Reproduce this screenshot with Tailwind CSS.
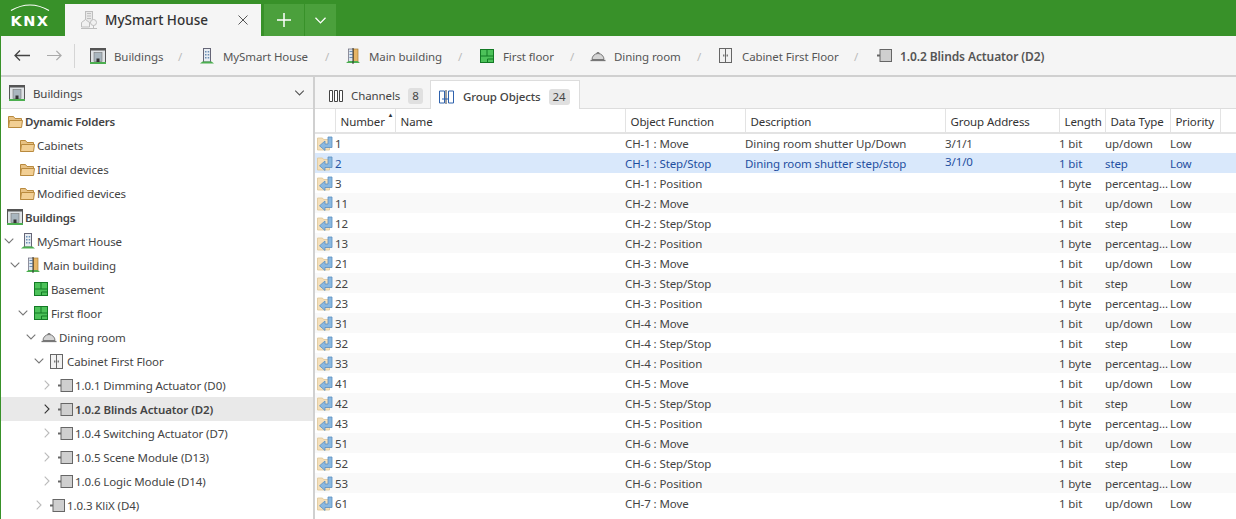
<!DOCTYPE html>
<html lang="en">
<head>
<meta charset="UTF-8" />
<title>ETS - MySmart House</title>
<script src="https://cdn.jsdelivr.net/npm/@tailwindcss/browser@4"></script>
</head>
<body class="h-[519px] w-[1236px] overflow-hidden bg-white font-['Noto_Sans','Open_Sans',sans-serif] text-[11.5px] tracking-[-0.1px] text-[#444]">

<!-- icon sprites -->
<svg class="hidden">
  <symbol id="i-buildings" viewBox="0 0 16 16">
    <rect x="0.5" y="0.5" width="15" height="14" fill="#dfe3e6" stroke="#555"/>
    <rect x="0.5" y="0.5" width="15" height="2" fill="#555"/>
    <rect x="4" y="4.5" width="8" height="9" fill="#a9b6bf" stroke="#777" stroke-width=".6"/>
    <rect x="6.5" y="10.5" width="3" height="3.5" fill="#333"/>
    <rect x="0" y="14" width="16" height="2" fill="#4caf50"/>
  </symbol>
  <symbol id="i-house" viewBox="0 0 16 16">
    <rect x="4.5" y="0.5" width="7" height="13.5" fill="#e8edf2" stroke="#667"/>
    <path d="M6 3h1.500v1.500H6zM8.700 3h1.500v1.500H8.700zM6 6h1.500v1.500H6zM8.700 6h1.500v1.500H8.700zM6 9h1.500v1.500H6zM8.700 9h1.500v1.500H8.700z" fill="#6b8fb5"/>
    <path d="M1 15.500 3.500 13.500h9l2.500 2z" fill="#4caf50"/>
  </symbol>
  <symbol id="i-main" viewBox="0 0 16 16">
    <rect x="3.500" y="1" width="5" height="13" fill="#dfe6ee" stroke="#667" stroke-width=".7"/>
    <rect x="8.500" y="1" width="4.500" height="13" fill="#e6b566" stroke="#a87c35" stroke-width=".7"/>
    <path d="M4.500 3h3v1h-3zM4.500 6h3v1h-3zM4.500 9h3v1h-3z" fill="#6b8fb5"/>
    <path d="M1 15 3.500 13h9l2.500 2z" fill="#4caf50"/>
    <path d="M8 0v16" stroke="#222" stroke-width=".9"/>
  </symbol>
  <symbol id="i-floor" viewBox="0 0 14 14">
    <rect x="0.500" y="0.500" width="13" height="13" fill="#4dc25a" stroke="#137a25"/>
    <path d="M7 .5V7M.5 7h13M7.500 10h6M7.500 10v3.500" stroke="#137a25" fill="none"/>
  </symbol>
  <symbol id="i-room" viewBox="0 0 16 12">
    <path d="M2 9.500a6 6 0 0 1 12 0z" fill="#d4d4d4" stroke="#777"/>
    <path d="M.5 10.500h15" stroke="#777" stroke-width="1.300"/>
    <path d="M6.500 3.500a1.500 1 0 0 1 3 0" fill="none" stroke="#777"/>
  </symbol>
  <symbol id="i-cabinet" viewBox="0 0 13 15">
    <rect x="0.500" y="0.500" width="12" height="14" fill="#f1f1f1" stroke="#666"/>
    <path d="M6.500 .5v14" stroke="#666"/>
    <path d="M4.800 6.500v2M8.200 6.500v2" stroke="#444"/>
  </symbol>
  <symbol id="i-device" viewBox="0 0 15 13">
    <path d="M0 5.500h3v2H0z" fill="#666"/>
    <rect x="3" y="0.500" width="11.500" height="12" fill="#cfcfcf" stroke="#666"/>
  </symbol>
  <symbol id="i-folder" viewBox="0 0 15 13">
    <path d="M.5 12.500V1.500h5l1.500 2h6.500v2" fill="#e8c285" stroke="#b98a3e"/>
    <path d="M.5 12.500l1-7h13l-1 7z" fill="#f2cf94" stroke="#b98a3e"/>
  </symbol>
  <symbol id="i-object" viewBox="0 0 16 15">
    <path d="M.5 14V2h5l1 1.500h6V14z" fill="#f5e0bb" stroke="#ddc595" stroke-width=".8"/>
    <path d="M11 1h4v10.500H8v3L2.500 9.750 8 5v3h3z" fill="#8ab8e0" stroke="#5a8fc0" stroke-width=".8"/>
  </symbol>
  <symbol id="i-down" viewBox="0 0 10 6"><path d="M.7.7 5 5l4.300-4.300" fill="none" stroke="currentColor" stroke-width="1.100"/></symbol>
  <symbol id="i-right" viewBox="0 0 6 10"><path d="M.7.7 5 5 .7 9.300" fill="none" stroke="currentColor" stroke-width="1.100"/></symbol>
</svg>

<!-- title bar -->
<header class="flex h-9 items-end bg-[#389129]">
  <div class="flex h-9 w-[65px] items-center pl-[10px]">
    <div class="relative w-[40px] pt-[6px] text-center font-['DejaVu_Sans',sans-serif] text-[14.5px] leading-none font-bold tracking-[1.5px] text-white">
      <svg class="absolute top-[-5px] left-0 h-[8px] w-[40px]" viewBox="0 0 40 8"><path d="M1 7.500Q20-3.500 39 7.500" fill="none" stroke="#fff" stroke-width="1.200"/></svg>
      KNX
    </div>
  </div>
  <div class="flex h-8 w-[196px] items-center bg-[#f5f5f5] pl-4 text-[13.5px] tracking-normal text-[#333]">
    <svg class="h-[18px] w-[16px] opacity-50" viewBox="0 0 16 18">
      <rect x="4.500" y="0.500" width="7" height="11" fill="#ddd" stroke="#888"/>
      <path d="M6 2.500h4M6 5h4M6 7.500h4" stroke="#888"/>
      <path d="M0.500 16V11.500L4.500 8.500l4 3V16z" fill="#eee" stroke="#888"/>
      <circle cx="12.500" cy="11.500" r="3" fill="#eee" stroke="#888"/>
      <path d="M12.500 14.500V17M0 17.500h16" stroke="#888"/>
    </svg>
    <span class="ml-[8px] w-[133px] font-medium">MySmart House</span>
    <svg class="h-[10px] w-[10px]" viewBox="0 0 10 10"><path d="M.5.500l9 9M9.500.500l-9 9" stroke="#555" stroke-width="1"/></svg>
  </div>
  <div class="ml-[3px] flex h-8 w-10 items-center justify-center bg-[#4ba03c]">
    <svg class="h-[14px] w-[14px]" viewBox="0 0 14 14"><path d="M7 0v14M0 7h14" stroke="#fff" stroke-width="1.500"/></svg>
  </div>
  <div class="ml-px flex h-8 w-[31px] items-center justify-center bg-[#4ba03c] text-white">
    <svg class="h-[7px] w-[13px]" viewBox="0 0 10 6"><use href="#i-down"/></svg>
  </div>
</header>

<div class="border-l border-[#389129]">
  <!-- breadcrumb toolbar -->
  <nav class="flex h-[41px] items-center border-b-2 border-[#d0d0d0] bg-[#f5f5f5] text-[#555]">
    <svg class="ml-[13px] h-[11px] w-[16px]" viewBox="0 0 16 11"><path d="M16 5.500H1M6 .5l-5 5 5 5" fill="none" stroke="#444" stroke-width="1.300"/></svg>
    <svg class="ml-[17px] h-[11px] w-[15px]" viewBox="0 0 16 11"><path d="M0 5.500h15M10 .5l5 5-5 5" fill="none" stroke="#aaa" stroke-width="1.300"/></svg>
    <div class="ml-[12px] h-6 w-px bg-[#d5d5d5]"></div>
    <svg class="ml-[15px] h-4 w-4"><use href="#i-buildings"/></svg>
    <span class="ml-[8px] w-[48px] pt-[2px] whitespace-nowrap">Buildings</span>
    <span class="ml-[16px] w-[4px] pt-[2px] text-[#bbb]">/</span>
    <svg class="ml-[17px] h-4 w-4"><use href="#i-house"/></svg>
    <span class="ml-[8px] w-[85px] pt-[2px] whitespace-nowrap">MySmart House</span>
    <span class="ml-[17px] w-[4px] pt-[2px] text-[#bbb]">/</span>
    <svg class="ml-[16px] h-4 w-4"><use href="#i-main"/></svg>
    <span class="ml-[8px] w-[73px] pt-[2px] whitespace-nowrap">Main building</span>
    <span class="ml-[16px] w-[4px] pt-[2px] text-[#bbb]">/</span>
    <svg class="ml-[18px] h-[14px] w-[14px]"><use href="#i-floor"/></svg>
    <span class="ml-[9px] w-[51px] pt-[2px] whitespace-nowrap">First floor</span>
    <span class="ml-[16px] w-[4px] pt-[2px] text-[#bbb]">/</span>
    <svg class="ml-[16px] h-[12px] w-4"><use href="#i-room"/></svg>
    <span class="ml-[8px] w-[67px] pt-[2px] whitespace-nowrap">Dining room</span>
    <span class="ml-[16px] w-[4px] pt-[2px] text-[#bbb]">/</span>
    <svg class="ml-[18px] h-[15px] w-[13px]"><use href="#i-cabinet"/></svg>
    <span class="ml-[10px] w-[97px] pt-[2px] whitespace-nowrap">Cabinet First Floor</span>
    <span class="ml-[15px] w-[4px] pt-[2px] text-[#bbb]">/</span>
    <svg class="ml-[19px] h-[13px] w-[15px]"><use href="#i-device"/></svg>
    <span class="ml-[8px] pt-[2px] text-[12px] font-semibold">1.0.2 Blinds Actuator (D2)</span>
  </nav>

  <div class="flex">
    <!-- left tree -->
    <aside class="h-[442px] w-[312px] shrink-0 overflow-hidden">
      <div class="flex h-[32px] items-center border-b border-[#ddd] bg-[#f5f5f5] pl-[8px] pr-[8px]">
        <svg class="h-4 w-4"><use href="#i-buildings"/></svg>
        <span class="ml-[8px] pt-[2px]">Buildings</span>
        <svg class="ml-auto h-[6px] w-[11px] text-[#555]" viewBox="0 0 10 6"><use href="#i-down"/></svg>
      </div>
      <ul class="text-[#444] [&>li]:flex [&>li]:h-6 [&>li]:items-center [&_span]:pt-[2px]">
        <li class="pl-[7px] font-semibold tracking-[-0.2px]"><svg class="mr-[2px] h-[13px] w-[15px]"><use href="#i-folder"/></svg><span>Dynamic Folders</span></li>
        <li class="pl-[19px]"><svg class="mr-[2px] h-[13px] w-[15px]"><use href="#i-folder"/></svg><span>Cabinets</span></li>
        <li class="pl-[19px]"><svg class="mr-[2px] h-[13px] w-[15px]"><use href="#i-folder"/></svg><span>Initial devices</span></li>
        <li class="pl-[19px]"><svg class="mr-[2px] h-[13px] w-[15px]"><use href="#i-folder"/></svg><span>Modified devices</span></li>
        <li class="pl-[6px] font-semibold tracking-[-0.2px]"><svg class="mr-[2px] h-4 w-4"><use href="#i-buildings"/></svg><span>Buildings</span></li>
        <li class="pl-[3px]"><svg class="mr-[6px] h-[6px] w-[10px] text-[#777]" viewBox="0 0 10 6"><use href="#i-down"/></svg><svg class="mr-px h-4 w-4"><use href="#i-house"/></svg><span>MySmart House</span></li>
        <li class="pl-[9px]"><svg class="mr-[5px] h-[6px] w-[10px] text-[#777]" viewBox="0 0 10 6"><use href="#i-down"/></svg><svg class="mr-[2px] h-4 w-4"><use href="#i-main"/></svg><span>Main building</span></li>
        <li class="pl-[33px]"><svg class="mr-[3px] h-[14px] w-[14px]"><use href="#i-floor"/></svg><span>Basement</span></li>
        <li class="pl-[17px]"><svg class="mr-[6px] h-[6px] w-[10px] text-[#777]" viewBox="0 0 10 6"><use href="#i-down"/></svg><svg class="mr-[3px] h-[14px] w-[14px]"><use href="#i-floor"/></svg><span>First floor</span></li>
        <li class="pl-[25px]"><svg class="mr-[5px] h-[6px] w-[10px] text-[#777]" viewBox="0 0 10 6"><use href="#i-down"/></svg><svg class="mr-[2px] h-[12px] w-4"><use href="#i-room"/></svg><span>Dining room</span></li>
        <li class="pl-[33px]"><svg class="mr-[6px] h-[6px] w-[10px] text-[#777]" viewBox="0 0 10 6"><use href="#i-down"/></svg><svg class="mr-[4px] h-[15px] w-[13px]"><use href="#i-cabinet"/></svg><span>Cabinet First Floor</span></li>
        <li class="pl-[43px]"><svg class="mr-[8px] h-[10px] w-[6px] text-[#bbb]" viewBox="0 0 6 10"><use href="#i-right"/></svg><svg class="mr-[2px] h-[13px] w-[15px]"><use href="#i-device"/></svg><span>1.0.1 Dimming Actuator (D0)</span></li>
        <li class="bg-[#e9e9e9] pl-[43px] font-semibold"><svg class="mr-[8px] h-[10px] w-[6px] text-[#333]" viewBox="0 0 6 10"><use href="#i-right"/></svg><svg class="mr-[2px] h-[13px] w-[15px]"><use href="#i-device"/></svg><span>1.0.2 Blinds Actuator (D2)</span></li>
        <li class="pl-[43px]"><svg class="mr-[8px] h-[10px] w-[6px] text-[#bbb]" viewBox="0 0 6 10"><use href="#i-right"/></svg><svg class="mr-[2px] h-[13px] w-[15px]"><use href="#i-device"/></svg><span>1.0.4 Switching Actuator (D7)</span></li>
        <li class="pl-[43px]"><svg class="mr-[8px] h-[10px] w-[6px] text-[#bbb]" viewBox="0 0 6 10"><use href="#i-right"/></svg><svg class="mr-[2px] h-[13px] w-[15px]"><use href="#i-device"/></svg><span>1.0.5 Scene Module (D13)</span></li>
        <li class="pl-[43px]"><svg class="mr-[8px] h-[10px] w-[6px] text-[#bbb]" viewBox="0 0 6 10"><use href="#i-right"/></svg><svg class="mr-[2px] h-[13px] w-[15px]"><use href="#i-device"/></svg><span>1.0.6 Logic Module (D14)</span></li>
        <li class="pl-[35px]"><svg class="mr-[8px] h-[10px] w-[6px] text-[#bbb]" viewBox="0 0 6 10"><use href="#i-right"/></svg><svg class="mr-[2px] h-[13px] w-[15px]"><use href="#i-device"/></svg><span>1.0.3 KliX (D4)</span></li>
      </ul>
    </aside>
    <div class="w-[2px] shrink-0 bg-[#d0d0d0]"></div>

    <!-- right panel -->
    <main class="min-w-0 flex-1">
      <div class="flex h-[32px] items-end border-b border-[#ddd] bg-[#f5f5f5]">
        <div class="flex h-[24px] w-[115px] items-center pl-[14px]">
          <svg class="h-[12px] w-[14px]" viewBox="0 0 14 12"><path d="M.5.500h3v11h-3zM5.500.500h3v11h-3zM10.500.500h3v11h-3z" fill="#fff" stroke="#444"/></svg>
          <span class="ml-[8px]">Channels</span>
          <span class="ml-[8px] rounded-[3px] bg-[#e0e0e0] px-[4px] leading-[16px]">8</span>
        </div>
        <div class="-mb-px flex h-[29px] w-[150px] items-center border border-b-0 border-[#ddd] bg-white pt-[4px] pl-[8px]">
          <svg class="h-[14px] w-[15px]" viewBox="0 0 15 14"><path d="M.5 1h5v12h-5zM9.500 1h5v12h-5z" fill="#fff" stroke="#2f62ad"/><path d="M7 0v14" stroke="#444"/><path d="M3 9h6" stroke="#2f62ad"/></svg>
          <span class="ml-[9px] font-medium">Group Objects</span>
          <span class="ml-[8px] rounded-[3px] bg-[#e0e0e0] px-[4px] leading-[16px]">24</span>
        </div>
      </div>

      <table class="w-[921px] table-fixed border-collapse [&_td]:h-5 [&_td]:overflow-hidden [&_td]:p-0 [&_td]:pt-[1px] [&_td]:whitespace-nowrap [&_td:first-child]:pt-0 [&_tbody_tr:nth-child(even)]:bg-[#f9f9f9]">
        <colgroup>
          <col class="w-[20px]" /><col class="w-[60px]" /><col class="w-[230px]" /><col class="w-[120px]" /><col class="w-[200px]" /><col class="w-[114px]" /><col class="w-[46px]" /><col class="w-[65px]" /><col class="w-[50px]" /><col />
        </colgroup>
        <thead class="[&_th]:h-[24px] [&_th]:border-r [&_th]:border-b-2 [&_th]:border-[#e3e3e3] [&_th]:p-0 [&_th]:pt-[2px] [&_th]:pl-[5px] [&_th]:text-left [&_th]:font-normal [&_th]:whitespace-nowrap [&_th]:text-[#333]">
          <tr>
            <th></th>
            <th><span class="relative">Number<span class="absolute top-[-3px] left-[47px] text-[6px]">▲</span></span></th>
            <th>Name</th><th>Object Function</th><th>Description</th><th>Group Address</th><th>Length</th><th>Data Type</th><th>Priority</th><th class="!border-r-0"></th>
          </tr>
        </thead>
        <tbody class="[&_td:first-child]:pl-[2px]">
          <tr><td><svg class="h-[15px] w-4"><use href="#i-object"/></svg></td><td>1</td><td></td><td>CH-1 : Move</td><td>Dining room shutter Up/Down</td><td>3/1/1</td><td>1 bit</td><td>up/down</td><td>Low</td><td></td></tr>
          <tr class="!bg-[#d9e8fb] text-[#1f4fa0]"><td><svg class="h-[15px] w-4"><use href="#i-object"/></svg></td><td>2</td><td></td><td>CH-1 : Step/Stop</td><td>Dining room shutter step/stop</td><td><span class="relative top-[-2px]">3/1/0</span></td><td>1 bit</td><td>step</td><td>Low</td><td></td></tr>
          <tr><td><svg class="h-[15px] w-4"><use href="#i-object"/></svg></td><td>3</td><td></td><td>CH-1 : Position</td><td></td><td></td><td>1 byte</td><td>percentag...</td><td>Low</td><td></td></tr>
          <tr><td><svg class="h-[15px] w-4"><use href="#i-object"/></svg></td><td>11</td><td></td><td>CH-2 : Move</td><td></td><td></td><td>1 bit</td><td>up/down</td><td>Low</td><td></td></tr>
          <tr><td><svg class="h-[15px] w-4"><use href="#i-object"/></svg></td><td>12</td><td></td><td>CH-2 : Step/Stop</td><td></td><td></td><td>1 bit</td><td>step</td><td>Low</td><td></td></tr>
          <tr><td><svg class="h-[15px] w-4"><use href="#i-object"/></svg></td><td>13</td><td></td><td>CH-2 : Position</td><td></td><td></td><td>1 byte</td><td>percentag...</td><td>Low</td><td></td></tr>
          <tr><td><svg class="h-[15px] w-4"><use href="#i-object"/></svg></td><td>21</td><td></td><td>CH-3 : Move</td><td></td><td></td><td>1 bit</td><td>up/down</td><td>Low</td><td></td></tr>
          <tr><td><svg class="h-[15px] w-4"><use href="#i-object"/></svg></td><td>22</td><td></td><td>CH-3 : Step/Stop</td><td></td><td></td><td>1 bit</td><td>step</td><td>Low</td><td></td></tr>
          <tr><td><svg class="h-[15px] w-4"><use href="#i-object"/></svg></td><td>23</td><td></td><td>CH-3 : Position</td><td></td><td></td><td>1 byte</td><td>percentag...</td><td>Low</td><td></td></tr>
          <tr><td><svg class="h-[15px] w-4"><use href="#i-object"/></svg></td><td>31</td><td></td><td>CH-4 : Move</td><td></td><td></td><td>1 bit</td><td>up/down</td><td>Low</td><td></td></tr>
          <tr><td><svg class="h-[15px] w-4"><use href="#i-object"/></svg></td><td>32</td><td></td><td>CH-4 : Step/Stop</td><td></td><td></td><td>1 bit</td><td>step</td><td>Low</td><td></td></tr>
          <tr><td><svg class="h-[15px] w-4"><use href="#i-object"/></svg></td><td>33</td><td></td><td>CH-4 : Position</td><td></td><td></td><td>1 byte</td><td>percentag...</td><td>Low</td><td></td></tr>
          <tr><td><svg class="h-[15px] w-4"><use href="#i-object"/></svg></td><td>41</td><td></td><td>CH-5 : Move</td><td></td><td></td><td>1 bit</td><td>up/down</td><td>Low</td><td></td></tr>
          <tr><td><svg class="h-[15px] w-4"><use href="#i-object"/></svg></td><td>42</td><td></td><td>CH-5 : Step/Stop</td><td></td><td></td><td>1 bit</td><td>step</td><td>Low</td><td></td></tr>
          <tr><td><svg class="h-[15px] w-4"><use href="#i-object"/></svg></td><td>43</td><td></td><td>CH-5 : Position</td><td></td><td></td><td>1 byte</td><td>percentag...</td><td>Low</td><td></td></tr>
          <tr><td><svg class="h-[15px] w-4"><use href="#i-object"/></svg></td><td>51</td><td></td><td>CH-6 : Move</td><td></td><td></td><td>1 bit</td><td>up/down</td><td>Low</td><td></td></tr>
          <tr><td><svg class="h-[15px] w-4"><use href="#i-object"/></svg></td><td>52</td><td></td><td>CH-6 : Step/Stop</td><td></td><td></td><td>1 bit</td><td>step</td><td>Low</td><td></td></tr>
          <tr><td><svg class="h-[15px] w-4"><use href="#i-object"/></svg></td><td>53</td><td></td><td>CH-6 : Position</td><td></td><td></td><td>1 byte</td><td>percentag...</td><td>Low</td><td></td></tr>
          <tr><td><svg class="h-[15px] w-4"><use href="#i-object"/></svg></td><td>61</td><td></td><td>CH-7 : Move</td><td></td><td></td><td>1 bit</td><td>up/down</td><td>Low</td><td></td></tr>
        </tbody>
      </table>
    </main>
  </div>
</div>
</body>
</html>
